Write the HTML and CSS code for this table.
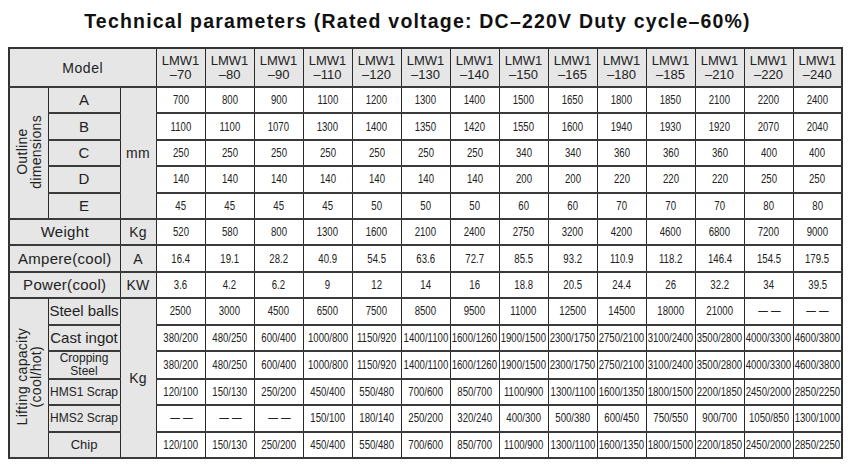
FILE: index.html
```html
<!DOCTYPE html>
<html>
<head>
<meta charset="utf-8">
<link rel="stylesheet" href="styles.css">
</head>
<body>
<h1 class="title">Technical parameters (Rated voltage: DC–220V Duty cycle–60%)</h1>
<table class="spec">
<colgroup>
<col class="c-grp"><col class="c-lbl"><col class="c-unit">
<col class="c-d"><col class="c-d"><col class="c-d"><col class="c-d"><col class="c-d"><col class="c-d"><col class="c-d">
<col class="c-d"><col class="c-d"><col class="c-d"><col class="c-d"><col class="c-d"><col class="c-d"><col class="c-d">
</colgroup>
<tr class="head">
<th colspan="3" class="model">Model</th>
<th>LMW1<br>–70</th><th>LMW1<br>–80</th><th>LMW1<br>–90</th><th>LMW1<br>–110</th><th>LMW1<br>–120</th><th>LMW1<br>–130</th><th>LMW1<br>–140</th><th>LMW1<br>–150</th><th>LMW1<br>–165</th><th>LMW1<br>–180</th><th>LMW1<br>–185</th><th>LMW1<br>–210</th><th>LMW1<br>–220</th><th>LMW1<br>–240</th>
</tr>
<tr>
<th rowspan="5" class="grp"><span class="vert">Outline<br>dimensions</span></th>
<th class="lbl">A</th>
<th rowspan="5" class="unit">mm</th>
<td><span>700</span></td><td><span>800</span></td><td><span>900</span></td><td><span>1100</span></td><td><span>1200</span></td><td><span>1300</span></td><td><span>1400</span></td><td><span>1500</span></td><td><span>1650</span></td><td><span>1800</span></td><td><span>1850</span></td><td><span>2100</span></td><td><span>2200</span></td><td><span>2400</span></td>
</tr>
<tr>
<th class="lbl">B</th>
<td><span>1100</span></td><td><span>1100</span></td><td><span>1070</span></td><td><span>1300</span></td><td><span>1400</span></td><td><span>1350</span></td><td><span>1420</span></td><td><span>1550</span></td><td><span>1600</span></td><td><span>1940</span></td><td><span>1930</span></td><td><span>1920</span></td><td><span>2070</span></td><td><span>2040</span></td>
</tr>
<tr>
<th class="lbl">C</th>
<td><span>250</span></td><td><span>250</span></td><td><span>250</span></td><td><span>250</span></td><td><span>250</span></td><td><span>250</span></td><td><span>250</span></td><td><span>340</span></td><td><span>340</span></td><td><span>360</span></td><td><span>360</span></td><td><span>360</span></td><td><span>400</span></td><td><span>400</span></td>
</tr>
<tr>
<th class="lbl">D</th>
<td><span>140</span></td><td><span>140</span></td><td><span>140</span></td><td><span>140</span></td><td><span>140</span></td><td><span>140</span></td><td><span>140</span></td><td><span>200</span></td><td><span>200</span></td><td><span>220</span></td><td><span>220</span></td><td><span>220</span></td><td><span>250</span></td><td><span>250</span></td>
</tr>
<tr>
<th class="lbl">E</th>
<td><span>45</span></td><td><span>45</span></td><td><span>45</span></td><td><span>45</span></td><td><span>50</span></td><td><span>50</span></td><td><span>50</span></td><td><span>60</span></td><td><span>60</span></td><td><span>70</span></td><td><span>70</span></td><td><span>70</span></td><td><span>80</span></td><td><span>80</span></td>
</tr>
<tr>
<th colspan="2" class="lbl big">Weight</th><th class="unit">Kg</th>
<td><span>520</span></td><td><span>580</span></td><td><span>800</span></td><td><span>1300</span></td><td><span>1600</span></td><td><span>2100</span></td><td><span>2400</span></td><td><span>2750</span></td><td><span>3200</span></td><td><span>4200</span></td><td><span>4600</span></td><td><span>6800</span></td><td><span>7200</span></td><td><span>9000</span></td>
</tr>
<tr>
<th colspan="2" class="lbl big">Ampere(cool)</th><th class="unit">A</th>
<td><span>16.4</span></td><td><span>19.1</span></td><td><span>28.2</span></td><td><span>40.9</span></td><td><span>54.5</span></td><td><span>63.6</span></td><td><span>72.7</span></td><td><span>85.5</span></td><td><span>93.2</span></td><td><span>110.9</span></td><td><span>118.2</span></td><td><span>146.4</span></td><td><span>154.5</span></td><td><span>179.5</span></td>
</tr>
<tr>
<th colspan="2" class="lbl big">Power(cool)</th><th class="unit">KW</th>
<td><span>3.6</span></td><td><span>4.2</span></td><td><span>6.2</span></td><td><span>9</span></td><td><span>12</span></td><td><span>14</span></td><td><span>16</span></td><td><span>18.8</span></td><td><span>20.5</span></td><td><span>24.4</span></td><td><span>26</span></td><td><span>32.2</span></td><td><span>34</span></td><td><span>39.5</span></td>
</tr>
<tr>
<th rowspan="6" class="grp"><span class="vert">Lifting capacity<br>(cool/hot)</span></th>
<th class="lbl">Steel balls</th>
<th rowspan="6" class="unit">Kg</th>
<td><span>2500</span></td><td><span>3000</span></td><td><span>4500</span></td><td><span>6500</span></td><td><span>7500</span></td><td><span>8500</span></td><td><span>9500</span></td><td><span>11000</span></td><td><span>12500</span></td><td><span>14500</span></td><td><span>18000</span></td><td><span>21000</span></td><td><span class="dash">——</span></td><td><span class="dash">——</span></td>
</tr>
<tr>
<th class="lbl">Cast ingot</th>
<td><span>380/200</span></td><td><span>480/250</span></td><td><span>600/400</span></td><td><span>1000/800</span></td><td><span>1150/920</span></td><td><span>1400/1100</span></td><td><span>1600/1260</span></td><td><span>1900/1500</span></td><td><span>2300/1750</span></td><td><span>2750/2100</span></td><td><span>3100/2400</span></td><td><span>3500/2800</span></td><td><span>4000/3300</span></td><td><span>4600/3800</span></td>
</tr>
<tr>
<th class="lbl small">Cropping<br>Steel</th>
<td><span>380/200</span></td><td><span>480/250</span></td><td><span>600/400</span></td><td><span>1000/800</span></td><td><span>1150/920</span></td><td><span>1400/1100</span></td><td><span>1600/1260</span></td><td><span>1900/1500</span></td><td><span>2300/1750</span></td><td><span>2750/2100</span></td><td><span>3100/2400</span></td><td><span>3500/2800</span></td><td><span>4000/3300</span></td><td><span>4600/3800</span></td>
</tr>
<tr>
<th class="lbl small">HMS1 Scrap</th>
<td><span>120/100</span></td><td><span>150/130</span></td><td><span>250/200</span></td><td><span>450/400</span></td><td><span>550/480</span></td><td><span>700/600</span></td><td><span>850/700</span></td><td><span>1100/900</span></td><td><span>1300/1100</span></td><td><span>1600/1350</span></td><td><span>1800/1500</span></td><td><span>2200/1850</span></td><td><span>2450/2000</span></td><td><span>2850/2250</span></td>
</tr>
<tr>
<th class="lbl small">HMS2 Scrap</th>
<td><span class="dash">——</span></td><td><span class="dash">——</span></td><td><span class="dash">——</span></td><td><span>150/100</span></td><td><span>180/140</span></td><td><span>250/200</span></td><td><span>320/240</span></td><td><span>400/300</span></td><td><span>500/380</span></td><td><span>600/450</span></td><td><span>750/550</span></td><td><span>900/700</span></td><td><span>1050/850</span></td><td><span>1300/1000</span></td>
</tr>
<tr>
<th class="lbl mid">Chip</th>
<td><span>120/100</span></td><td><span>150/130</span></td><td><span>250/200</span></td><td><span>450/400</span></td><td><span>550/480</span></td><td><span>700/600</span></td><td><span>850/700</span></td><td><span>1100/900</span></td><td><span>1300/1100</span></td><td><span>1600/1350</span></td><td><span>1800/1500</span></td><td><span>2200/1850</span></td><td><span>2450/2000</span></td><td><span>2850/2250</span></td>
</tr>
</table>
</body>
</html>
```
FILE: styles.css
```css
html, body {
  margin: 0;
  padding: 0;
  background: #ffffff;
}
body {
  font-family: "Liberation Sans", Arial, sans-serif;
  color: #222222;
}
.title {
  margin: 0 0 15px 0;
  padding: 10px 15px 0 0;
  font-size: 19.5px;
  line-height: 22px;
  font-weight: bold;
  text-align: center;
  color: #111111;
  letter-spacing: 1.2px;
}
.spec {
  margin-left: 8px;
  width: 833px;
  table-layout: fixed;
  border-collapse: collapse;
  border: 2px solid #333333;
}
.c-grp { width: 39px; }
.c-lbl { width: 72px; }
.c-unit { width: 36px; }
.c-d { width: 49px; }
.spec th, .spec td {
  border: 1px solid #2a2a2a;
  border-bottom: 2px solid #3a3a3a;
  padding: 0;
  text-align: center;
  vertical-align: middle;
  overflow: hidden;
  white-space: nowrap;
}
.spec tr { height: 26.4px; }
.spec tr.head { height: 39px; }
.spec th {
  background: #e6e6e6;
  font-weight: normal;
  color: #222222;
}
.head th {
  font-size: 13px;
  line-height: 14px;
  padding-top: 1px;
}
.head th.model {
  font-size: 14px;
  letter-spacing: 0.6px;
}
.spec td {
  background: #ffffff;
  font-size: 12px;
  color: #222222;
}
.spec td span {
  display: inline-block;
  margin: 0 -12px;
  transform: scaleX(0.8);
}
.spec td span.dash {
  letter-spacing: 4px;
  margin-right: -16px;
}
.lbl {
  font-size: 15px;
  line-height: 16px;
}
.lbl.big {
  font-size: 15px;
  letter-spacing: 0.3px;
}
.lbl.small {
  font-size: 12px;
  line-height: 13px;
}
.lbl.mid {
  font-size: 13px;
}
.unit {
  font-size: 14px;
  letter-spacing: 0.3px;
}
.grp {
  font-size: 14px;
}
.vert {
  display: inline-block;
  writing-mode: vertical-rl;
  transform: rotate(180deg);
  line-height: 14px;
  letter-spacing: 0.3px;
  white-space: nowrap;
}
```
